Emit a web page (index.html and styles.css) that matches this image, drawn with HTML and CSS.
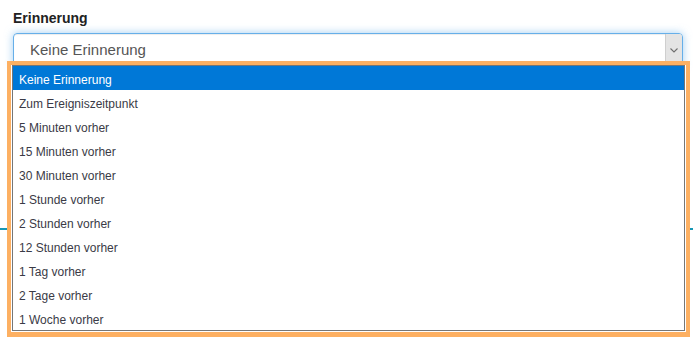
FILE: index.html
```html
<!DOCTYPE html>
<html lang="de">
<head>
  <meta charset="UTF-8" />
  <meta name="viewport" content="width=device-width, initial-scale=1.0"/>
  <title>Erinnerung</title>
  <link rel="stylesheet" href="styles.css">
</head>
<body>

  <div class="page">
    <!-- Reminder field -->
    <div class="form-group">
      <label class="label">Erinnerung</label>
      <div class="select">
        <span class="select-value">Keine Erinnerung</span>
        <span class="select-arrow">
          <svg width="8" height="5" viewBox="0 0 8 5"><path d="M0.5 0.5 L4 4 L7.5 0.5" fill="none" stroke="#6f6f6f" stroke-width="1.1"/></svg>
        </span>
      </div>
    </div>

    <div class="divider"></div>

    <!-- Open dropdown list -->
    <div class="dropdown">
      <ul class="listbox">
        <li class="option selected">Keine Erinnerung</li>
        <li class="option">Zum Ereigniszeitpunkt</li>
        <li class="option">5 Minuten vorher</li>
        <li class="option">15 Minuten vorher</li>
        <li class="option">30 Minuten vorher</li>
        <li class="option">1 Stunde vorher</li>
        <li class="option">2 Stunden vorher</li>
        <li class="option">12 Stunden vorher</li>
        <li class="option">1 Tag vorher</li>
        <li class="option">2 Tage vorher</li>
        <li class="option">1 Woche vorher</li>
      </ul>
    </div>
  </div>

</body>
</html>
```

FILE: styles.css
```css
:root {
  --text-main: #333333;
  --option-text: #3a3a46;
  --focus-border: #66afe9;
  --highlight: #0078d7;
  --frame: #fdb062;
  --teal: #1797b5;
}

html, body {
  height: 100%;
}

body {
  margin: 0;
  font-family: "Liberation Sans", Arial, sans-serif;
  color: var(--text-main);
  background: #ffffff;
}

.page {
  position: relative;
  box-sizing: border-box;
  min-height: 357px;
  padding: 8px 10px 0 13px;
}

.label {
  display: block;
  font-size: 14px;
  font-weight: bold;
  line-height: 20px;
  margin-bottom: 5px;
  color: #222;
}

.select {
  height: 34px;
  box-sizing: border-box;
  border: 1px solid var(--focus-border);
  border-radius: 4px;
  box-shadow: inset 0 1px 1px rgba(0, 0, 0, 0.075), 0 0 8px rgba(102, 175, 233, 0.6);
  display: flex;
  align-items: stretch;
  overflow: hidden;
}

.select-value {
  flex: 1;
  padding-left: 16px;
  font-size: 15px;
  line-height: 32px;
  color: #555;
}

.select-arrow {
  width: 16px;
  background: #e4e4e4;
  border-left: 1px solid #cfcfcf;
  display: flex;
  align-items: center;
  justify-content: center;
}

.divider {
  margin: 161px -10px 0 -13px;
  height: 2px;
  background: var(--teal);
}

.dropdown {
  position: absolute;
  left: 7px;
  top: 61px;
  width: 673px;
  border: 4px solid var(--frame);
  border-bottom-width: 5px;
  padding: 0 1px 1px 1px;
  background: #ffffff;
}

.listbox {
  list-style: none;
  margin: 0;
  padding: 0;
  border: 1px solid #767676;
  background: #ffffff;
}

.option {
  height: 20px;
  padding: 4px 6px 0;
  font-size: 12px;
  line-height: 20px;
  color: var(--option-text);
}

.option.selected {
  background: var(--highlight);
  color: #ffffff;
}
```
